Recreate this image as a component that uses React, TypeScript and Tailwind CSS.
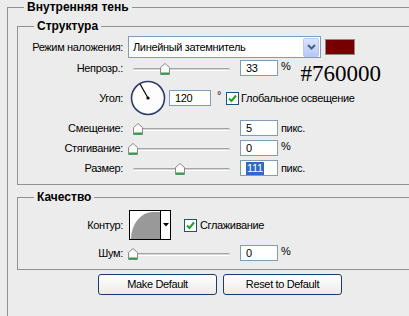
import React from 'react';

const labelCls = 'w-[105px] shrink-0 text-right whitespace-nowrap';

function Slider({ thumb }: { thumb: number }) {
  return (
    <div className="relative w-[112px] h-[20px] shrink-0">
      <div className="absolute left-[5px] top-[10px] w-[97px] h-[3px] rounded-full bg-[#d6d6d6] border-t border-[#a4a4a4] border-b border-b-white" />
      <svg
        className="absolute top-[5px]"
        style={{ left: thumb - 5 }}
        width="10"
        height="12"
        viewBox="0 0 10 12"
      >
        <path d="M0.5 4.5 L5 0.5 L9.5 4.5 L9.5 11.5 L0.5 11.5 Z" fill="#fbfbfb" stroke="#8a8a8a" />
        <rect x="1" y="9.5" width="8" height="2" fill="#2ea043" />
      </svg>
    </div>
  );
}

function Field({ value, w = 'w-[38px]', selected = false }: { value: string; w?: string; selected?: boolean }) {
  return (
    <div className={`${w} h-[16px] shrink-0 border border-[#7f9db9] bg-white flex items-center pl-[5px] leading-none`}>
      {selected ? <span className="bg-[#316ac5] text-white px-[1px] py-[1px]">{value}</span> : <span>{value}</span>}
    </div>
  );
}

function Check() {
  return (
    <span className="w-[13px] h-[13px] shrink-0 border border-[#1c5180] bg-white flex items-center justify-center">
      <svg width="9" height="9" viewBox="0 0 9 9">
        <path d="M1 4.5 L3.5 7 L8 1.5" fill="none" stroke="#21a121" strokeWidth="2" />
      </svg>
    </span>
  );
}

function Row({ label, h = 'h-[20px]', children }: { label: string; h?: string; children: React.ReactNode }) {
  return (
    <div className={`flex items-center ${h}`}>
      <span className={labelCls}>{label}</span>
      <div className="ml-[5px] flex items-center whitespace-nowrap">{children}</div>
    </div>
  );
}

export default function App() {
  return (
    <div className="w-[409px] h-[316px] overflow-hidden bg-[#ececec] text-[11px] tracking-[-0.35px] text-black font-['Liberation_Sans',Arial,sans-serif]">
      <fieldset className="ml-[7px] w-[460px] h-[340px] border border-[#919191]">
        <legend className="ml-[16px] px-[3px] font-bold text-[12px] tracking-normal leading-[14px]">Внутренняя тень</legend>

        <fieldset className="ml-[9px] mt-[5px] w-[440px] border border-[#919191] pb-[6px]">
          <legend className="ml-[16px] px-[3px] font-bold text-[12px] tracking-normal leading-[14px]">Структура</legend>

          <div className="mt-[3px]">
            <Row label="Режим наложения:" h="h-[22px]">
              <div className="w-[193px] h-[22px] border border-[#7f9db9] bg-white flex items-center justify-between pl-[4px] pr-[1px]">
                <span>Линейный затемнитель</span>
                <span className="w-[16px] h-[19px] rounded-[2px] border border-[#b9c9ef] bg-gradient-to-b from-[#dbe5fe] to-[#b6c8f6] flex items-center justify-center">
                  <svg width="9" height="6" viewBox="0 0 9 6">
                    <path d="M1 1 L4.5 4.5 L8 1" fill="none" stroke="#4d6185" strokeWidth="2" />
                  </svg>
                </span>
              </div>
              <span className="ml-[4px] w-[30px] h-[16px] border border-[#8a8a8a] bg-[#760000]" />
            </Row>

            <Row label="Непрозр.:">
              <Slider thumb={37} />
              <Field value="33" />
              <span className="ml-[3px] -mt-[4px]">%</span>
              <span className="ml-[10px] mt-[10px] text-[23px] tracking-normal leading-[23px] font-['Liberation_Serif',serif]">#760000</span>
            </Row>

            <Row label="Угол:" h="h-[40px]">
              <svg className="ml-[2px] shrink-0" width="36" height="36" viewBox="0 0 36 36">
                <circle cx="18" cy="18" r="16.5" fill="#fdfdfd" stroke="#2c3b6b" strokeWidth="1.6" />
                <line x1="18" y1="18" x2="10" y2="4" stroke="#000" strokeWidth="1.2" />
                <circle cx="18" cy="18" r="1.6" fill="#000" />
              </svg>
              <div className="ml-[3px]">
                <Field value="120" w="w-[42px]" />
              </div>
              <span className="ml-[6px] -mt-[6px]">°</span>
              <span className="ml-[5px]">
                <Check />
              </span>
              <span className="ml-[2px]">Глобальное освещение</span>
            </Row>

            <Row label="Смещение:">
              <Slider thumb={10} />
              <Field value="5" />
              <span className="ml-[3px]">пикс.</span>
            </Row>

            <Row label="Стягивание:">
              <Slider thumb={5} />
              <Field value="0" />
              <span className="ml-[3px] -mt-[3px]">%</span>
            </Row>

            <Row label="Размер:">
              <Slider thumb={52} />
              <Field value="111" selected />
              <span className="ml-[3px]">пикс.</span>
            </Row>
          </div>
        </fieldset>

        <fieldset className="ml-[9px] mt-[5px] w-[440px] border border-[#919191] pb-[6px]">
          <legend className="ml-[16px] px-[3px] font-bold text-[12px] tracking-normal leading-[14px]">Качество</legend>

          <div className="mt-[6px]">
            <Row label="Контур:" h="h-[30px]">
              <div className="ml-[1px] w-[42px] h-[30px] border border-black bg-white flex">
                <svg width="30" height="28" viewBox="0 0 30 28" className="shrink-0">
                  <path d="M1 28 A 22 27 0 0 1 23 1 L 30 1 L 30 28 Z" fill="#999999" />
                </svg>
                <div className="flex-1 border-l border-black bg-white flex items-center justify-center">
                  <svg width="6" height="4" viewBox="0 0 6 4">
                    <path d="M0 0 L6 0 L3 3.5 Z" fill="#000" />
                  </svg>
                </div>
              </div>
              <span className="ml-[13px]">
                <Check />
              </span>
              <span className="ml-[3px]">Сглаживание</span>
            </Row>

            <div className="mt-[3px]">
              <Row label="Шум:">
                <Slider thumb={5} />
                <Field value="0" />
                <span className="ml-[3px] -mt-[3px]">%</span>
              </Row>
            </div>
          </div>
        </fieldset>

        <div className="mt-[4px] ml-[90px] flex gap-[6px]">
          <button className="w-[119px] h-[21px] rounded-[3px] border border-[#1c3c6e] bg-gradient-to-b from-white to-[#ecebe6] leading-none">
            Make Default
          </button>
          <button className="w-[119px] h-[21px] rounded-[3px] border border-[#1c3c6e] bg-gradient-to-b from-white to-[#ecebe6] leading-none">
            Reset to Default
          </button>
        </div>
      </fieldset>
    </div>
  );
}
